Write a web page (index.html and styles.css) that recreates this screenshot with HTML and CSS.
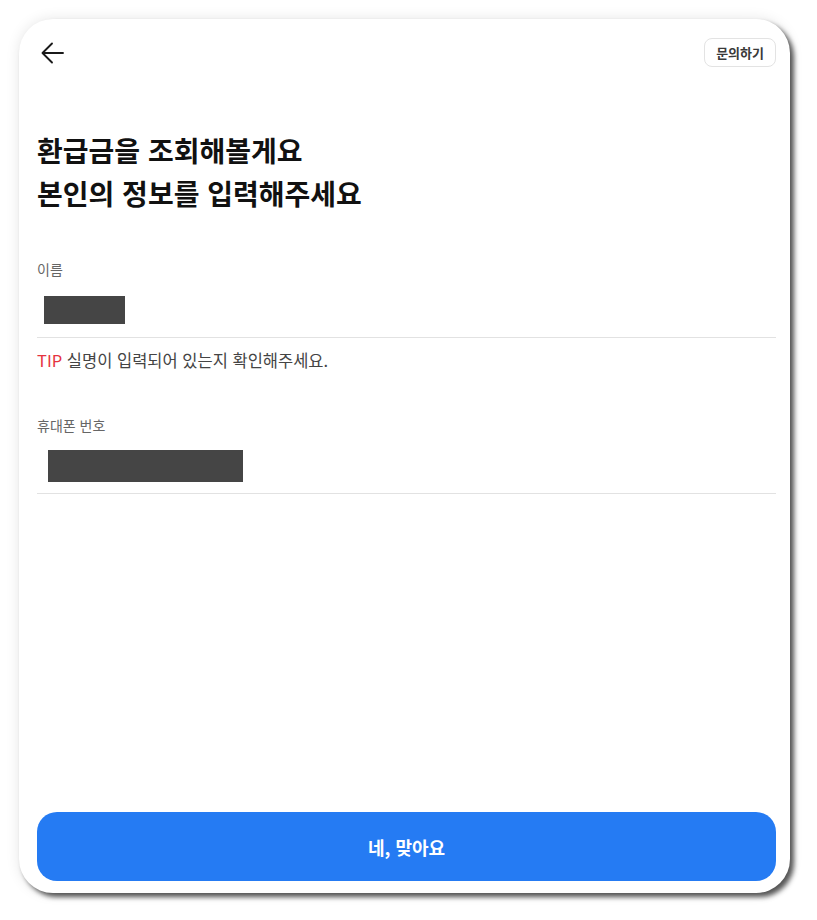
FILE: index.html
```html
<!DOCTYPE html>
<html lang="ko">
<head>
    <meta charset="UTF-8">
    <meta name="viewport" content="width=device-width, initial-scale=1.0">
    <title>환급금 조회</title>
    <link rel="stylesheet" href="styles.css">
</head>
<body>
    <div class="sheet">
        <div class="top-bar">
            <button class="back-btn" aria-label="뒤로">
                <svg width="26" height="26" viewBox="0 0 26 26" fill="none" stroke="#1a1a1a" stroke-width="1.9" stroke-linecap="round" stroke-linejoin="round">
                    <path d="M23 13H3"/>
                    <path d="M12 3.5L2.5 13L12 22.5"/>
                </svg>
            </button>
            <button class="help-btn">문의하기</button>
        </div>

        <h1 class="title">환급금을 조회해볼게요<br>본인의 정보를 입력해주세요</h1>

        <div class="field">
            <div class="field-label">이름</div>
            <div class="field-input name-input">
                <span class="mask mask-name"></span>
            </div>
            <p class="tip"><span class="tip-mark">TIP</span> 실명이 입력되어 있는지 확인해주세요.</p>
        </div>

        <div class="field phone-field">
            <div class="field-label">휴대폰 번호</div>
            <div class="field-input phone-input">
                <span class="mask mask-phone"></span>
            </div>
        </div>

        <button class="confirm-btn">네, 맞아요</button>
    </div>
</body>
</html>
```

FILE: styles.css
```css
* {
    margin: 0;
    padding: 0;
    box-sizing: border-box;
}

body {
    font-family: "Noto Sans CJK KR", "Noto Sans", sans-serif;
    background: #ffffff;
    padding: 19px 27px 27px 19px;
}

.sheet {
    width: 771px;
    height: 874px;
    background: #fff;
    border-radius: 34px;
    box-shadow: 4px 4px 5px rgba(0, 0, 0, 0.65), 0 0 14px rgba(0, 0, 0, 0.1);
    padding: 19px 14px 12px 18px;
    display: flex;
    flex-direction: column;
}

.top-bar {
    display: flex;
    justify-content: space-between;
    align-items: center;
    height: 29px;
}

.back-btn {
    background: none;
    border: none;
    width: 26px;
    height: 26px;
    margin-left: 3px;
    display: flex;
    cursor: pointer;
}

.help-btn {
    background: #fff;
    border: 1px solid #e3e3e3;
    border-radius: 8px;
    height: 29px;
    padding: 0 11px;
    font-family: inherit;
    font-size: 13px;
    font-weight: 700;
    color: #3a3a3a;
    cursor: pointer;
}

.title {
    margin-top: 62px;
    font-size: 28px;
    font-weight: 700;
    line-height: 43px;
    color: #111;
}

.field {
    margin-top: 44px;
}

.field-label {
    font-size: 14px;
    line-height: 20px;
    color: #666;
}

.field-input {
    border-bottom: 1px solid #e2e2e2;
    display: flex;
}

.name-input {
    padding: 17px 0 13px 7px;
}

.phone-input {
    padding: 15px 0 11px 11px;
}

.mask {
    display: block;
    background: #454545;
}

.mask-name {
    width: 81px;
    height: 28px;
}

.mask-phone {
    width: 195px;
    height: 32px;
}

.tip {
    margin-top: 11px;
    font-size: 16.5px;
    line-height: 22px;
    color: #444;
}

.tip-mark {
    color: #e5333f;
}

.confirm-btn {
    margin-top: auto;
    height: 69px;
    width: 100%;
    border: none;
    border-radius: 20px;
    background: #257bf3;
    color: #fff;
    font-family: inherit;
    font-size: 18px;
    font-weight: 700;
    cursor: pointer;
}
```
